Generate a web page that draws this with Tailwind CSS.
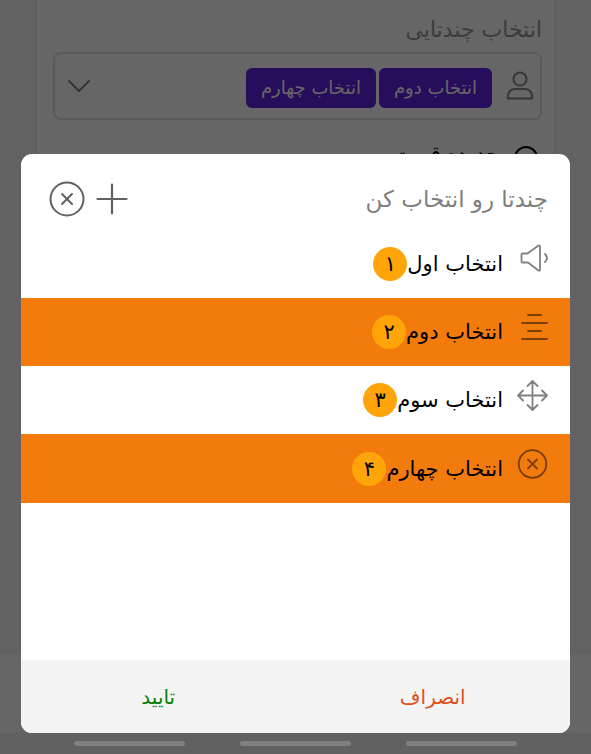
<!DOCTYPE html>
<html lang="fa" dir="rtl">
<head>
<meta charset="utf-8">
<meta name="viewport" content="width=device-width, initial-scale=1">
<title>انتخاب چندتایی</title>
<script src="https://cdn.jsdelivr.net/npm/@tailwindcss/browser@4"></script>
</head>
<body class="relative flex h-screen flex-col overflow-hidden bg-[#f5f5f5] font-['DejaVu_Sans','Noto_Sans',sans-serif] text-black">
  <main class="mx-[35px] min-h-0 flex-1 overflow-hidden border-x-2 border-[#ebebeb] bg-white pt-4 pr-3 pl-4">
    <h2 class="text-[22px] leading-7 text-[#969696]">انتخاب چندتایی</h2>
    <div class="mt-2 flex h-[68px] items-center rounded-lg border-2 border-[#e2e2e2] pr-1 pl-3">
      <svg class="size-8 shrink-0" viewBox="0 0 32 32" fill="none" stroke="#8a8a8a" stroke-width="2"><circle cx="16" cy="9" r="6.5"/><path d="M4 28.500V26a7 7 0 0 1 7-7h10a7 7 0 0 1 7 7v2.500z" stroke-linejoin="round"/></svg>
      <ul class="mt-1 mr-3 flex gap-[3px] text-lg text-white">
        <li class="flex h-10 items-center rounded-md bg-[#5f24e6] px-[15px]">انتخاب دوم</li>
        <li class="flex h-10 items-center rounded-md bg-[#5f24e6] px-[15px]">انتخاب چهارم</li>
      </ul>
      <button type="button" class="mr-auto" aria-label="باز کردن فهرست"><svg class="h-6 w-6" viewBox="0 0 24 24" fill="none" stroke="#808080" stroke-width="2" stroke-linecap="round" stroke-linejoin="round"><path d="M2 7l10 10L22 7"/></svg></button>
    </div>
    <label class="mt-[22px] flex items-start gap-1 pr-1 text-xl leading-6"><input type="radio" name="kind" class="mt-1 size-6 appearance-none rounded-full border-2 border-black">محدوده قیمت</label>
  </main>
  <div class="h-[79px] shrink-0 bg-white"></div>
  <div class="h-[21px] shrink-0 bg-[#f2f2f2]"></div>

  <div class="absolute inset-0 flex flex-col bg-black/60 px-[21px] pt-[154px]">
    <section role="dialog" aria-modal="true" aria-labelledby="title" class="flex min-h-0 flex-1 flex-col overflow-hidden rounded-[11px] bg-white">
      <header class="flex h-[76px] shrink-0 items-center justify-between pt-[14px] pr-[22px] pl-7">
        <h1 id="title" class="text-[23px] leading-8 text-[#808080]">چندتا رو انتخاب کن</h1>
        <div class="flex items-center gap-[11px] text-[#606060]">
          <button type="button" aria-label="افزودن"><svg class="size-8" viewBox="0 0 32 32" fill="none" stroke="currentColor" stroke-width="2.200" stroke-linecap="round"><path d="M16 1.500v29M1.500 16h29"/></svg></button>
          <button type="button" aria-label="بستن"><svg class="size-9" viewBox="0 0 36 36" fill="none" stroke="currentColor" stroke-width="2" stroke-linecap="round"><circle cx="18" cy="18" r="16.500"/><path d="M13 13l10 10M23 13L13 23"/></svg></button>
        </div>
      </header>
      <ul role="listbox" aria-multiselectable="true" aria-label="گزینه‌ها" class="min-h-0 flex-1 text-[21px] leading-8">
        <li role="option" aria-selected="false" class="flex h-[68px] items-center pr-[21px]">
          <svg class="mb-2 size-8 shrink-0 text-[#808080]" viewBox="0 0 32 32" fill="none" stroke="currentColor" stroke-width="1.800" stroke-linejoin="round" stroke-linecap="round"><path d="M5.500 9.500h5L21.500 1.500Q23 .800 23 3V25Q23 27.500 21.500 26.500L11 18.500H5.500Q4.500 18.500 4.500 17.500V10.500Q4.500 9.500 5.500 9.500zM28 10q4 4 0 8"/></svg>
          <span class="mr-[14px]">انتخاب اول</span><span class="flex size-[34px] items-center justify-center rounded-full bg-[#ffa50a]">۱</span>
        </li>
        <li role="option" aria-selected="true" class="flex h-[68px] items-center bg-[#f27b0c] pr-[21px]">
          <svg class="mb-2 size-8 shrink-0 text-[#793e06]" viewBox="0 0 32 32" fill="none" stroke="currentColor" stroke-width="1.800" stroke-linecap="round"><path d="M11 3h13M5 11h25M11 19h13M5 27h25"/></svg>
          <span class="mr-[14px]">انتخاب دوم</span><span class="flex size-[34px] items-center justify-center rounded-full bg-[#ffa50a]">۲</span>
        </li>
        <li role="option" aria-selected="false" class="flex h-[68px] items-center pr-[21px]">
          <svg class="mb-2 size-8 shrink-0 text-[#808080]" viewBox="0 0 32 32" fill="none" stroke="currentColor" stroke-width="1.800" stroke-linecap="round" stroke-linejoin="round"><path d="M15.500 1v29M1 15.500h29M10.500 6l5-5 5 5M10.500 25l5 5 5-5M6 10.500l-5 5 5 5M25 10.500l5 5-5 5"/></svg>
          <span class="mr-[14px]">انتخاب سوم</span><span class="flex size-[34px] items-center justify-center rounded-full bg-[#ffa50a]">۳</span>
        </li>
        <li role="option" aria-selected="true" class="flex h-[69px] items-center bg-[#f27b0c] pr-[21px]">
          <svg class="mb-2 size-8 shrink-0 text-[#793e06]" viewBox="0 0 32 32" fill="none" stroke="currentColor" stroke-width="1.800" stroke-linecap="round"><circle cx="15.500" cy="15" r="13.800"/><path d="M11 10.500l9 9M20 10.500l-9 9"/></svg>
          <span class="mr-[14px]">انتخاب چهارم</span><span class="flex size-[34px] items-center justify-center rounded-full bg-[#ffa50a]">۴</span>
        </li>
      </ul>
      <footer class="grid h-[73px] shrink-0 grid-cols-2 bg-[#f4f4f4] text-xl">
        <button type="button" class="text-[#e0501a]">انصراف</button>
        <button type="button" class="text-[#088008]">تایید</button>
      </footer>
    </section>
    <div class="flex h-[21px] shrink-0 items-center justify-center gap-[55px]" aria-hidden="true">
      <span class="h-[5px] w-[111px] rounded-full bg-[#808080]"></span>
      <span class="h-[5px] w-[111px] rounded-full bg-[#808080]"></span>
      <span class="h-[5px] w-[111px] rounded-full bg-[#808080]"></span>
    </div>
  </div>
</body>
</html>
